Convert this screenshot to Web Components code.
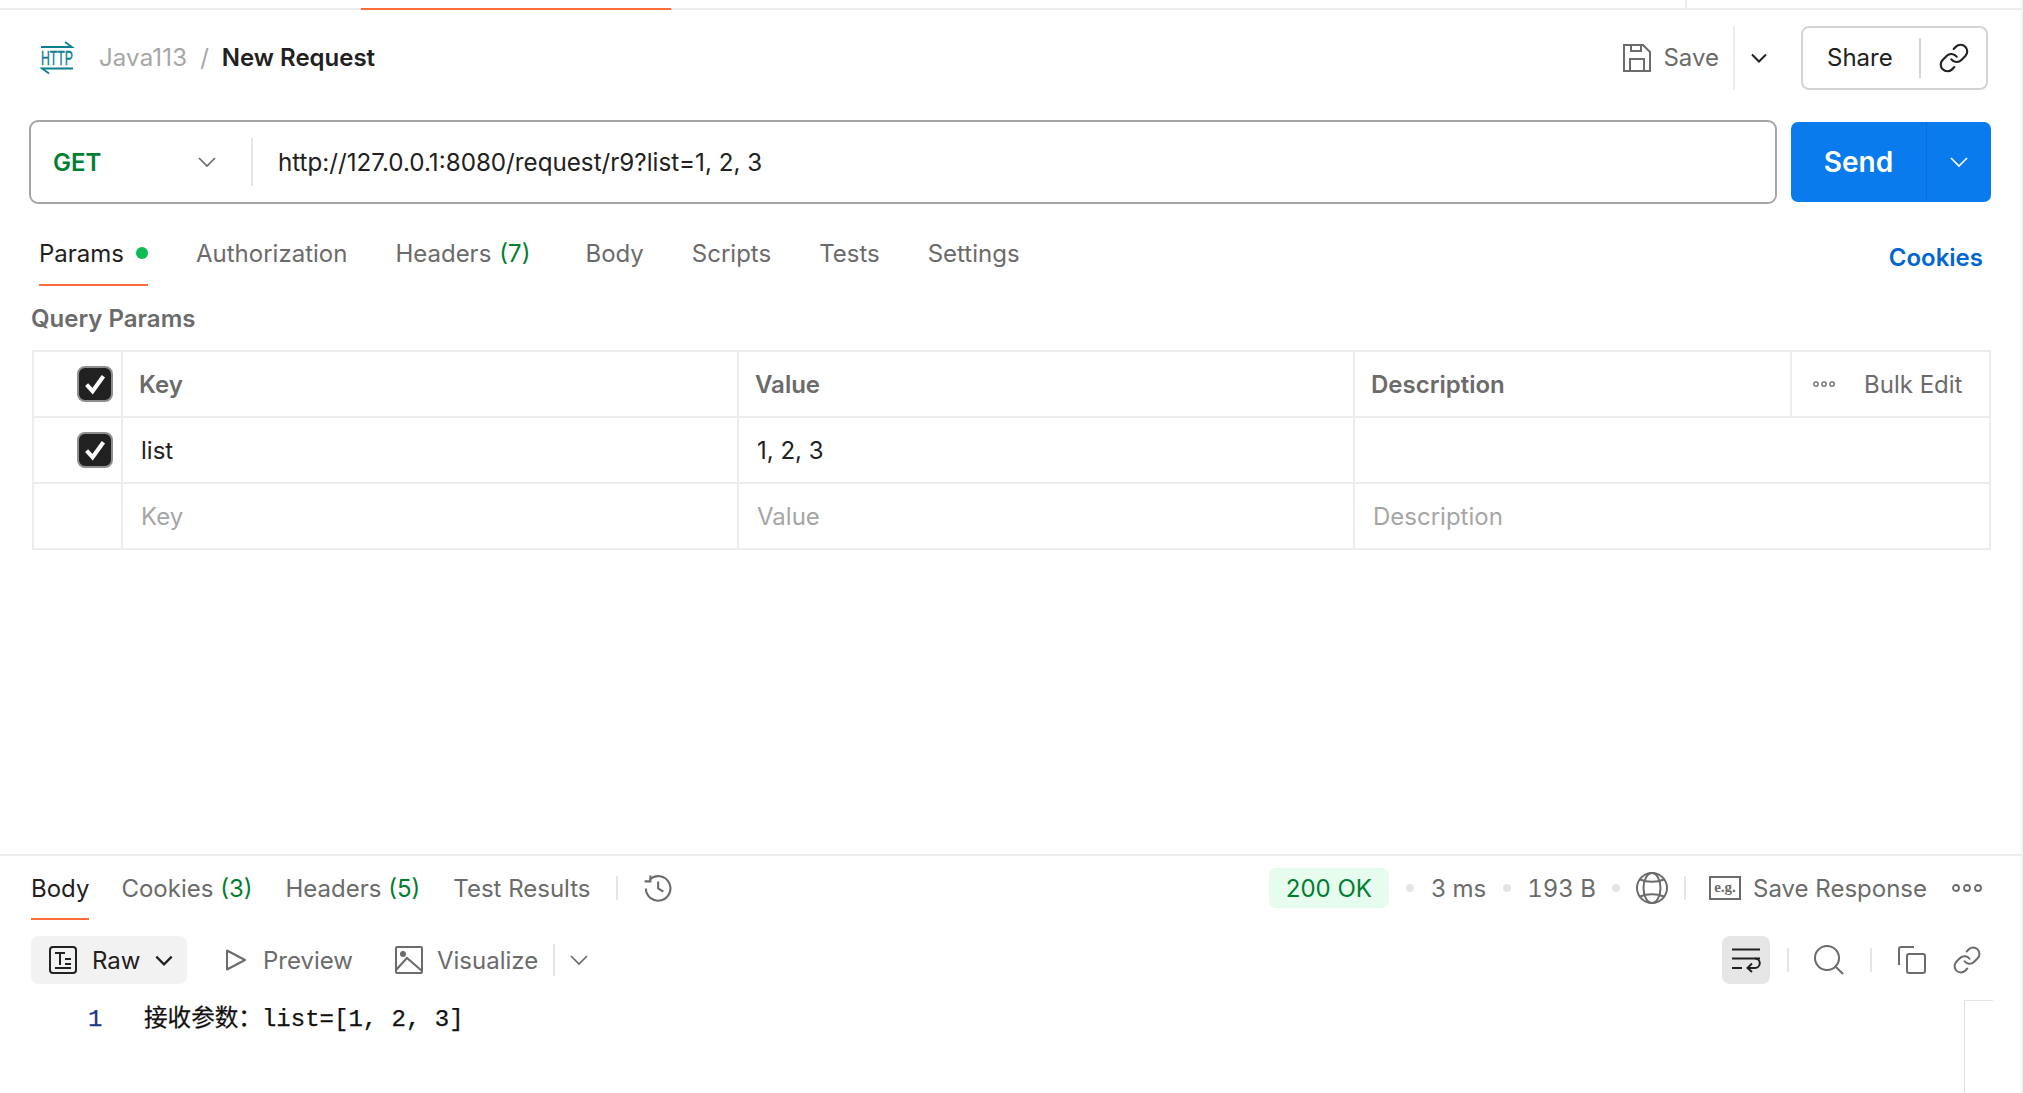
<!DOCTYPE html>
<html lang="en">
<head>
<meta charset="utf-8">
<title>New Request</title>
<style>
  html, body { margin: 0; padding: 0; background: #fff; }
  body { font-family: Inter, "Noto Sans CJK SC", sans-serif; font-size: 24px; color: #212121; }
</style>
</head>
<body>
<pm-app>
  <pm-topstrip></pm-topstrip>
  <pm-header></pm-header>
  <pm-urlbar method="GET" url="http://127.0.0.1:8080/request/r9?list=1, 2, 3"></pm-urlbar>
  <pm-request-tabs></pm-request-tabs>
  <pm-params>
    <pm-row head check><span slot="key">Key</span><span slot="value">Value</span><span slot="desc">Description</span></pm-row>
    <pm-row check><span slot="key">list</span><span slot="value">1, 2, 3</span></pm-row>
    <pm-row ghost><span slot="key">Key</span><span slot="value">Value</span><span slot="desc">Description</span></pm-row>
  </pm-params>
  <pm-response slot="bottom"></pm-response>
</pm-app>

<script>
const ICONS = {
  chevron: [16, 10, '<path d="M1 1.500 8 8.500 15 1.500" fill="none" stroke="currentColor" stroke-width="2"/>'],
  chevronthin: [18, 10, '<path d="M1 1 9 9 17 1" fill="none" stroke="currentColor" stroke-width="1.7"/>'],
  save: [28, 28, '<g fill="none" stroke="currentColor" stroke-width="2"><path d="M1 1h19l7 7v19H1z"/><path d="M8 1v6h10V1"/><path d="M7 27V15h14v12"/></g>'],
  link: [24, 24, '<g fill="none" stroke="currentColor" stroke-width="1.6" stroke-linecap="round"><path d="M10 13a5 5 0 0 0 7.540.540l3-3a5 5 0 0 0-7.070-7.070l-1.720 1.710"/><path d="M14 11a5 5 0 0 0-7.540-.540l-3 3a5 5 0 0 0 7.070 7.070l1.710-1.710"/></g>'],
  http: [32, 32, '<g fill="none" stroke="#0b7f92" stroke-width="1.800"><path d="M0 5H31L24 0"/><path d="M32 26.500H1L8 31.500"/></g><text x="0" y="23" font-family="Liberation Sans, sans-serif" font-size="21" fill="#0b7f92" stroke="#0b7f92" stroke-width=".4" textLength="32" lengthAdjust="spacingAndGlyphs">HTTP</text>'],
  check: [20, 20, '<path d="M3 10.500 8 16 17 3.500" fill="none" stroke="#fff" stroke-width="3.400"/>'],
  dots: [30, 8, '<g fill="none" stroke="currentColor" stroke-width="1.800"><circle cx="4" cy="4" r="3"/><circle cx="15" cy="4" r="3"/><circle cx="26" cy="4" r="3"/></g>'],
  history: [24, 24, '<g fill="none" stroke="currentColor" stroke-width="1.600"><path d="M3 12a9.500 9.500 0 1 0 3-7"/><path d="M6.500 2v4.500H2"/><path d="M12.500 6.500V12l4 2.500"/></g>'],
  globe: [32, 32, '<g fill="none" stroke="currentColor" stroke-width="2"><circle cx="16" cy="16" r="15"/><ellipse cx="16" cy="16" rx="8.500" ry="15"/><path d="M4 7.500c7 3 17 3 24 0M4 24.500c7-3 17-3 24 0"/></g>'],
  eg: [32, 24, '<rect x="1" y="1" width="30" height="22" fill="none" stroke="currentColor" stroke-width="2"/><text x="16" y="16" text-anchor="middle" font-family="Liberation Serif, serif" font-weight="700" font-size="15" fill="currentColor">e.g.</text>'],
  raw: [28, 28, '<rect x="1" y="1" width="26" height="26" rx="3" fill="none" stroke="currentColor" stroke-width="2"/><path d="M6 7h10M11 7v12M16 13h6M16 18h6M6 22h16" fill="none" stroke="currentColor" stroke-width="2"/>'],
  play: [22, 22, '<path d="M2 1.500V20.500L20 11z" fill="none" stroke="currentColor" stroke-width="2" stroke-linejoin="round"/>'],
  image: [28, 28, '<g fill="none" stroke="currentColor" stroke-width="2"><rect x="1" y="1" width="26" height="26" rx="1"/><path d="M1 24 12 12 27 25"/></g><circle cx="8" cy="8" r="3" fill="currentColor"/>'],
  wrap: [30, 24, '<g fill="none" stroke="currentColor" stroke-width="2"><path d="M1 1.500H29M1 10.500H29M1 20H11"/><path d="M18 20h6a4.700 4.700 0 0 0 0-9.500"/><path d="M21 15.500 16.500 20 21 24"/></g>'],
  search: [30, 30, '<g fill="none" stroke="currentColor" stroke-width="2"><circle cx="13" cy="13" r="12"/><path d="M22 22l7 7"/></g>'],
  copy: [28, 28, '<g fill="none" stroke="currentColor" stroke-width="2"><path d="M16 1H3a2 2 0 0 0-2 2v16"/><rect x="9" y="8" width="18" height="19" rx="2"/></g>']
};

class PmIcon extends HTMLElement {
  connectedCallback() {
    const [w, h, body] = ICONS[this.getAttribute("name")];
    const width = this.getAttribute("w") || w;
    const height = this.getAttribute("h") || h;
    this.attachShadow({ mode: "open" });
    this.shadowRoot.innerHTML = `
      <style>:host { display: inline-flex; flex: none; width: ${width}px; height: ${height}px; } svg { display: block; overflow: visible; }</style>
      <svg width="${width}" height="${height}" viewBox="0 0 ${w} ${h}">${body}</svg>`;
  }
}
customElements.define("pm-icon", PmIcon);

class PmApp extends HTMLElement {
  constructor() {
    super();
    this.attachShadow({ mode: "open" });
    this.shadowRoot.innerHTML = `
      <style>
        :host { display: flex; flex-direction: column; box-sizing: border-box; width: 2023px; height: 1093px; overflow: hidden; border-right: 2px solid #f2f2f2; }
        .push { margin-top: auto; }
      </style>
      <slot></slot>
      <div class="push"><slot name="bottom"></slot></div>`;
  }
}
customElements.define("pm-app", PmApp);

class PmTopstrip extends HTMLElement {
  constructor() {
    super();
    this.attachShadow({ mode: "open" });
    this.shadowRoot.innerHTML = `
      <style>
        :host { display: block; margin-right: -2px; }
        .up { height: 8px; display: flex; }
        .up i { width: 2px; margin-left: 1685px; background: #ededed; }
        .line { height: 2px; display: flex; background: #ededed; }
        .line b { width: 310px; margin-left: 361px; background: #ff6c37; }
      </style>
      <div class="up"><i></i></div>
      <div class="line"><b></b></div>`;
  }
}
customElements.define("pm-topstrip", PmTopstrip);

class PmHeader extends HTMLElement {
  constructor() {
    super();
    this.attachShadow({ mode: "open" });
    this.shadowRoot.innerHTML = `
      <style>
        :host { display: flex; align-items: center; height: 64px; margin-top: 16px; padding: 0 33px 0 41px; color: #6b6b6b; line-height: 28px; }
        .crumb { margin-left: 26px; color: #a6a6a6; letter-spacing: .15px; }
        .slash { margin: 0 13px; color: #a6a6a6; }
        .name { color: #212121; font-weight: 600; }
        .save { margin-left: auto; display: flex; align-items: center; height: 64px; }
        .save span { margin-left: 12px; }
        .sep { width: 2px; height: 64px; background: #ededed; margin-left: 14px; }
        .chev { margin: 0 34px 0 16px; color: #212121; }
        .share { box-sizing: border-box; display: flex; align-items: center; width: 187px; height: 64px; border: 2px solid #d4d4d4; border-radius: 8px; color: #212121; }
        .share span { margin-left: 24px; }
        .share i { width: 2px; height: 40px; margin-left: 26px; background: #d4d4d4; }
        .share pm-icon { margin-left: 17px; }
      </style>
      <pm-icon name="http"></pm-icon>
      <span class="crumb">Java113</span><span class="slash">/</span><span class="name">New Request</span>
      <div class="save">
        <pm-icon name="save"></pm-icon><span>Save</span>
        <div class="sep"></div>
        <pm-icon class="chev" name="chevron"></pm-icon>
        <div class="share"><span>Share</span><i></i><pm-icon name="link" w="32" h="32"></pm-icon></div>
      </div>`;
  }
}
customElements.define("pm-header", PmHeader);

class PmUrlbar extends HTMLElement {
  connectedCallback() {
    this.attachShadow({ mode: "open" });
    this.shadowRoot.innerHTML = `
      <style>
        :host { display: flex; align-items: center; margin-top: 30px; padding: 0 30px 0 29px; gap: 14px; }
        .box { box-sizing: border-box; flex: 1; display: flex; align-items: center; height: 84px; border: 2px solid #a6a6a6; border-radius: 9px; }
        .method { width: 145px; margin-left: 22px; color: #007f31; font-weight: 600; }
        .box pm-icon { color: #6b6b6b; }
        .sep { width: 2px; height: 48px; margin-left: 35px; background: #e6e6e6; }
        .url { margin-left: 25px; color: #212121; font-size: 24.2px; }
        .send { display: flex; height: 80px; width: 200px; border-radius: 7px; background: #097bed; color: #fff; }
        .send b { width: 135px; display: flex; align-items: center; justify-content: center; font-size: 28px; font-weight: 600; }
        .send div { flex: 1; display: flex; align-items: center; justify-content: center; border-left: 1px solid #0a6fd6; }
      </style>
      <div class="box">
        <span class="method">${this.getAttribute("method")}</span>
        <pm-icon name="chevronthin"></pm-icon>
        <div class="sep"></div>
        <span class="url">${this.getAttribute("url")}</span>
      </div>
      <div class="send"><b>Send</b><div><pm-icon name="chevronthin"></pm-icon></div></div>`;
  }
}
customElements.define("pm-urlbar", PmUrlbar);

class PmRequestTabs extends HTMLElement {
  constructor() {
    super();
    this.attachShadow({ mode: "open" });
    this.shadowRoot.innerHTML = `
      <style>
        :host { display: flex; align-items: stretch; gap: 48px; height: 66px; margin-top: 16px; padding: 0 38px 0 39px; color: #6b6b6b; }
        .tab { display: flex; align-items: center; gap: 12px; box-sizing: border-box; }
        .on { color: #212121; border-bottom: 2px solid #ff6c37; padding-top: 2px; }
        .on i { width: 12px; height: 12px; border-radius: 50%; background: #0cbb52; }
        em { font-style: normal; color: #007f31; margin-left: -4px; }
        .extra { margin-right: 7px; }
        .cookies { margin-left: auto; align-self: center; margin-top: 8px; color: #0265d2; font-weight: 600; }
      </style>
      <div class="tab on">Params<i></i></div>
      <div class="tab">Authorization</div>
      <div class="tab extra">Headers <em>(7)</em></div>
      <div class="tab">Body</div>
      <div class="tab">Scripts</div>
      <div class="tab">Tests</div>
      <div class="tab">Settings</div>
      <div class="cookies">Cookies</div>`;
  }
}
customElements.define("pm-request-tabs", PmRequestTabs);

class PmParams extends HTMLElement {
  constructor() {
    super();
    this.attachShadow({ mode: "open" });
    this.shadowRoot.innerHTML = `
      <style>
        :host { display: block; margin: 0 31px 0 32px; padding-top: 18px; }
        h2 { margin: 0 0 16px -1px; font: 600 24px/30px Inter, sans-serif; color: #6b6b6b; }
        .table { border: 2px solid #ededed; border-bottom: 0; width: 1959px; box-sizing: border-box; }
      </style>
      <h2>Query Params</h2>
      <div class="table"><slot></slot></div>`;
  }
}
customElements.define("pm-params", PmParams);

class PmRow extends HTMLElement {
  connectedCallback() {
    const head = this.hasAttribute("head");
    const ghost = this.hasAttribute("ghost");
    const check = this.hasAttribute("check");
    this.attachShadow({ mode: "open" });
    this.shadowRoot.innerHTML = `
      <style>
        :host { display: grid; grid-template-columns: 89px 616px 616px 1fr; height: 66px; box-sizing: border-box; border-bottom: 2px solid #ededed;
          color: ${ghost ? "#a6a6a6" : head ? "#6b6b6b" : "#212121"}; font-weight: ${head ? 600 : 400}; }
        .cell { display: flex; align-items: center; box-sizing: border-box; padding-left: ${head ? 16 : 18}px; border-right: 2px solid #ededed; }
        .cell:last-child { border-right: 0; padding-right: 0; }
        .box { box-sizing: border-box; width: 36px; height: 36px; margin-left: 43px; display: flex; align-items: center; justify-content: center; background: #212121; border: 2px solid #8f8f8f; border-radius: 8px; }
        .bulk { margin-left: auto; align-self: stretch; width: 199px; flex: none; box-sizing: border-box; display: flex; align-items: center; border-left: 2px solid #ededed; font-weight: 400; color: #6b6b6b; padding-left: 21px; }
        .bulk span { margin-left: 29px; }
      </style>
      <div class="cell" style="padding:0;">${check ? `<div class="box"><pm-icon name="check" w="24" h="24"></pm-icon></div>` : ""}</div>
      <div class="cell"><slot name="key"></slot></div>
      <div class="cell"><slot name="value"></slot></div>
      <div class="cell"><slot name="desc"></slot>${head ? `<div class="bulk"><pm-icon name="dots" w="22" h="6"></pm-icon><span>Bulk Edit</span></div>` : ""}</div>`;
  }
}
customElements.define("pm-row", PmRow);

class PmResponse extends HTMLElement {
  constructor() {
    super();
    this.attachShadow({ mode: "open" });
    this.shadowRoot.innerHTML = `
      <style>
        :host { display: block; position: relative; height: 239px; box-sizing: border-box; border-top: 2px solid #ededed; color: #6b6b6b; }
        .bar { display: flex; align-items: stretch; height: 64px; padding: 0 39px 0 31px; }
        .tab { display: flex; align-items: center; margin-right: 33px; box-sizing: border-box; white-space: pre; }
        .tab.on { color: #212121; border-bottom: 2px solid #ff6c37; padding-top: 2px; margin-right: 32px; }
        em { font-style: normal; color: #007f31; }
        .mid { display: flex; align-items: center; }
        .sep { width: 2px; height: 24px; background: #e6e6e6; flex: none; }
        .meta { margin-left: auto; display: flex; align-items: center; }
        .pill { display: flex; align-items: center; justify-content: center; width: 120px; height: 40px; background: #e5fcef; color: #007f31; border-radius: 7px; }
        .d { width: 8px; height: 8px; border-radius: 50%; background: #e6e6e6; margin: 0 17px; flex: none; }
        .tab-num { font-variant-numeric: tabular-nums; }
        .tools { display: flex; align-items: center; height: 48px; margin-top: 16px; padding: 0 39px 0 31px; }
        .raw { display: flex; align-items: center; width: 156px; height: 48px; box-sizing: border-box; padding-left: 18px; background: #f2f2f2; border-radius: 8px; color: #212121; }
        .raw span { margin: 0 15px; }
        .wrap { margin-left: auto; display: flex; align-items: center; justify-content: center; width: 48px; height: 48px; background: #e6e6e6; border-radius: 8px; color: #212121; }
        .code { display: flex; align-items: baseline; height: 40px; margin-top: 16px; font: 24px/40px "Liberation Mono", "Noto Sans CJK SC", monospace; color: #111; white-space: pre; -webkit-text-stroke: .25px #111; }
        .num { width: 56px; margin-left: 88px; color: #1c3a86; -webkit-text-stroke: .25px #1c3a86; }
        .cjk { font-size: 23.6px; }
        .scroll { position: absolute; left: 1964px; top: 144px; bottom: 0; width: 28px; border-left: 1px solid #e0e0e0; border-top: 1px solid #e6e6e6; }
      </style>
      <div class="bar">
        <div class="tab on">Body</div>
        <div class="tab">Cookies <em>(3)</em></div>
        <div class="tab">Headers <em>(5)</em></div>
        <div class="tab" style="margin-right:25px">Test Results</div>
        <div class="mid"><div class="sep"></div><pm-icon name="history" w="31" h="31" style="margin-left:24px"></pm-icon></div>
        <div class="meta">
          <div class="pill">200 OK</div><div class="d"></div>
          <span>3 ms</span><div class="d" style="margin-right:16px"></div>
          <span class="tab-num">193 B</span><div class="d" style="margin:0 16px"></div>
          <pm-icon name="globe"></pm-icon>
          <div class="sep" style="margin:0 23px 0 16px"></div>
          <pm-icon name="eg"></pm-icon>
          <span style="margin:0 25px 0 12px">Save Response</span>
          <pm-icon name="dots"></pm-icon>
        </div>
      </div>
      <div class="tools">
        <div class="raw"><pm-icon name="raw"></pm-icon><span>Raw</span><pm-icon name="chevron" w="18" h="11"></pm-icon></div>
        <pm-icon name="play" style="margin-left:38px"></pm-icon><span style="margin-left:16px">Preview</span>
        <pm-icon name="image" style="margin-left:42px"></pm-icon><span style="margin-left:14px">Visualize</span>
        <div class="sep" style="height:32px;margin-left:15px"></div>
        <pm-icon name="chevronthin" style="margin-left:15px"></pm-icon>
        <div class="wrap"><pm-icon name="wrap"></pm-icon></div>
        <div class="sep" style="margin-left:17px"></div>
        <pm-icon name="search" style="margin-left:25px"></pm-icon>
        <div class="sep" style="margin-left:26px"></div>
        <pm-icon name="copy" style="margin-left:26px"></pm-icon>
        <pm-icon name="link" w="30" h="30" style="margin-left:26px"></pm-icon>
      </div>
      <div class="code"><span class="num">1</span><span><span class="cjk">接收参数：</span>list=[1, 2, 3]</span></div>
      <div class="scroll"></div>`;
  }
}
customElements.define("pm-response", PmResponse);
</script>
</body>
</html>
